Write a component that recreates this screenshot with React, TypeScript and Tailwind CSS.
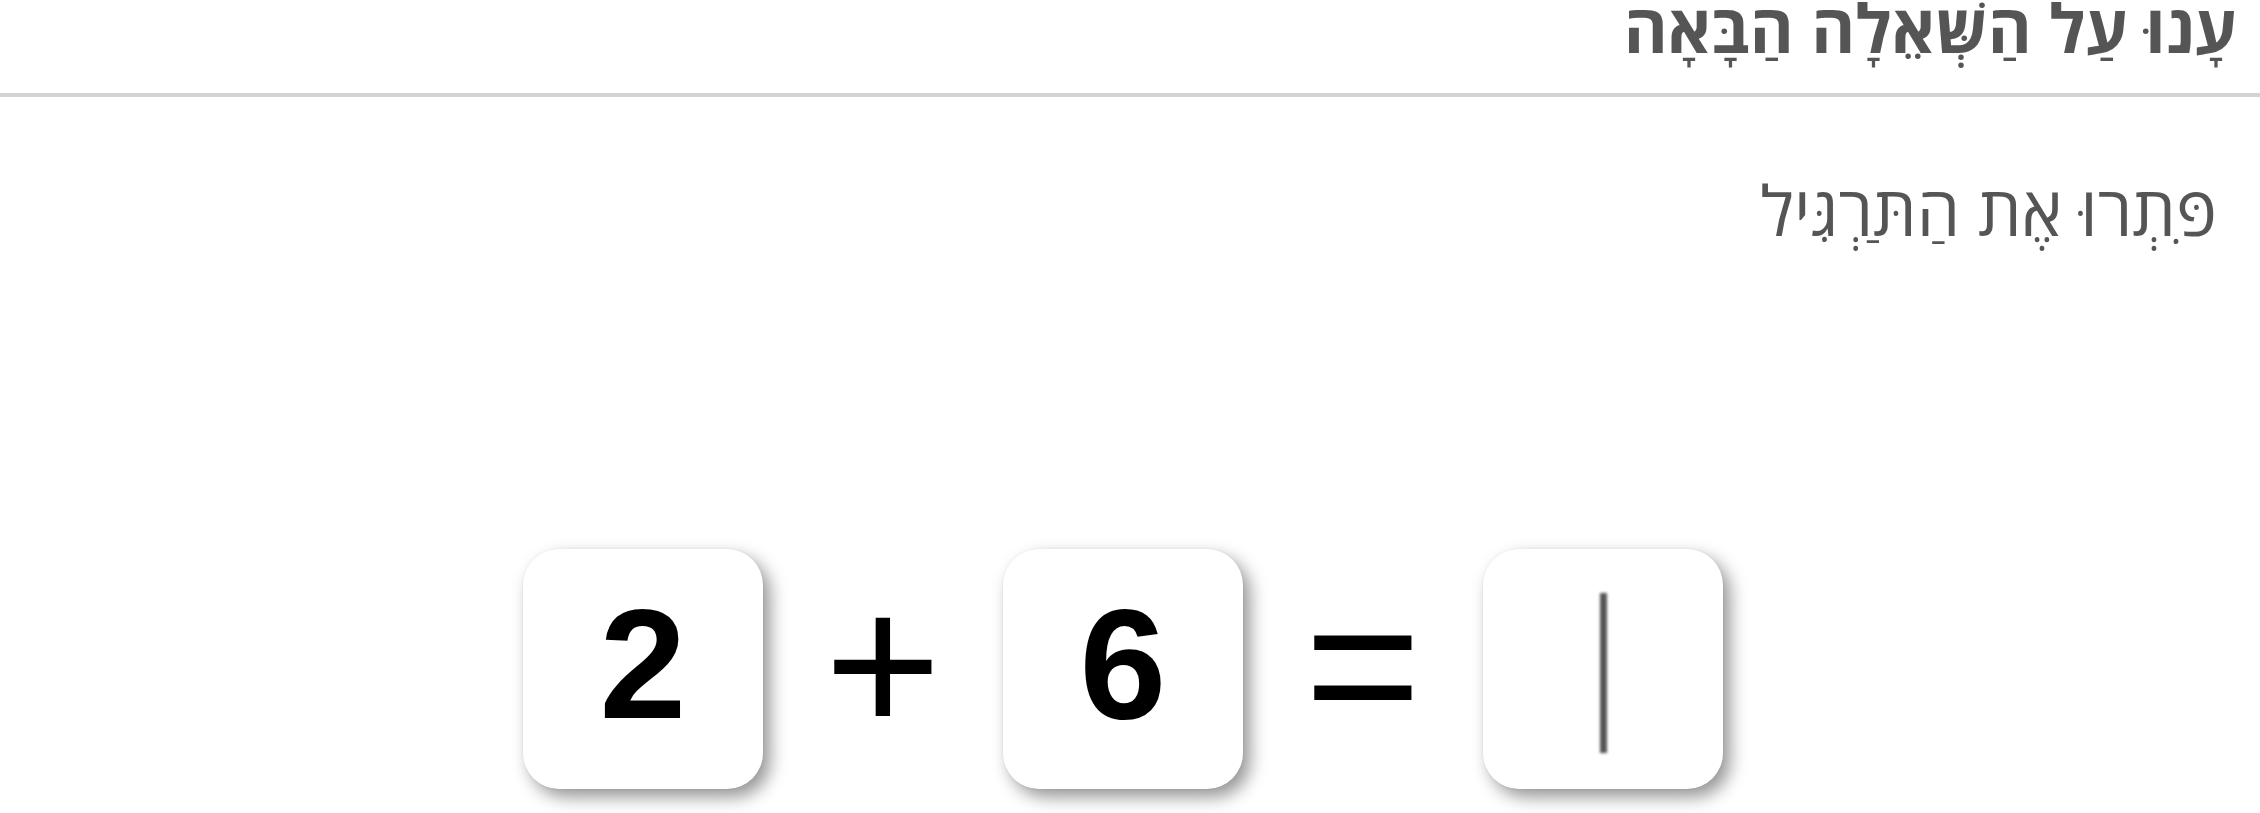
function Card({ children }: { children?: React.ReactNode }) {
  return (
    <div className="flex h-[240px] w-[240px] shrink-0 items-center justify-center rounded-[36px] bg-white shadow-[7px_8px_17px_rgba(0,0,0,0.42),0_0_3px_rgba(0,0,0,0.06)]">
      {children}
    </div>
  );
}

function Operator({ sign }: { sign: string }) {
  return (
    <div
      className="flex w-[98px] shrink-0 justify-center pb-[8px] text-[200px] leading-none text-black"
      style={{ fontFamily: '"Liberation Sans", Arial, sans-serif' }}
    >
      <span>{sign}</span>
    </div>
  );
}

function Digit({ value }: { value: string }) {
  return (
    <span
      className="pb-[10px] text-[156px] font-bold leading-none text-black"
      style={{ fontFamily: '"Liberation Sans", Arial, sans-serif' }}
    >
      {value}
    </span>
  );
}

export default function App() {
  return (
    <div className="min-h-[813px] w-full bg-white" dir="rtl">
      <header className="flex h-[97px] flex-col border-b-4 border-[#d3d3d3] pr-[23px]">
        <h1
          className="-mt-[6px] text-[67px] font-bold leading-none text-[#555]"
          style={{ fontFamily: '"Open Sans", "Noto Sans", sans-serif' }}
        >
          עָנוּ עַל הַשְּׁאֵלָה הַבָּאָה
        </h1>
      </header>
      <main className="flex flex-col">
        <p
          className="mt-[78px] pr-[43px] text-[69px] leading-none text-[#555]"
          style={{ fontFamily: '"Open Sans", "Noto Sans", sans-serif' }}
        >
          פִּתְרוּ אֶת הַתַּרְגִּיל
        </p>
        <div className="mt-[305px] flex items-center justify-center gap-[71px] pr-[14px]" dir="ltr">
          <Card>
            <Digit value="2" />
          </Card>
          <Operator sign="+" />
          <Card>
            <Digit value="6" />
          </Card>
          <Operator sign="=" />
          <Card>
            <div className="mt-[8px] h-[160px] w-[7px] bg-[#555] blur-[1.5px]" />
          </Card>
        </div>
      </main>
    </div>
  );
}
